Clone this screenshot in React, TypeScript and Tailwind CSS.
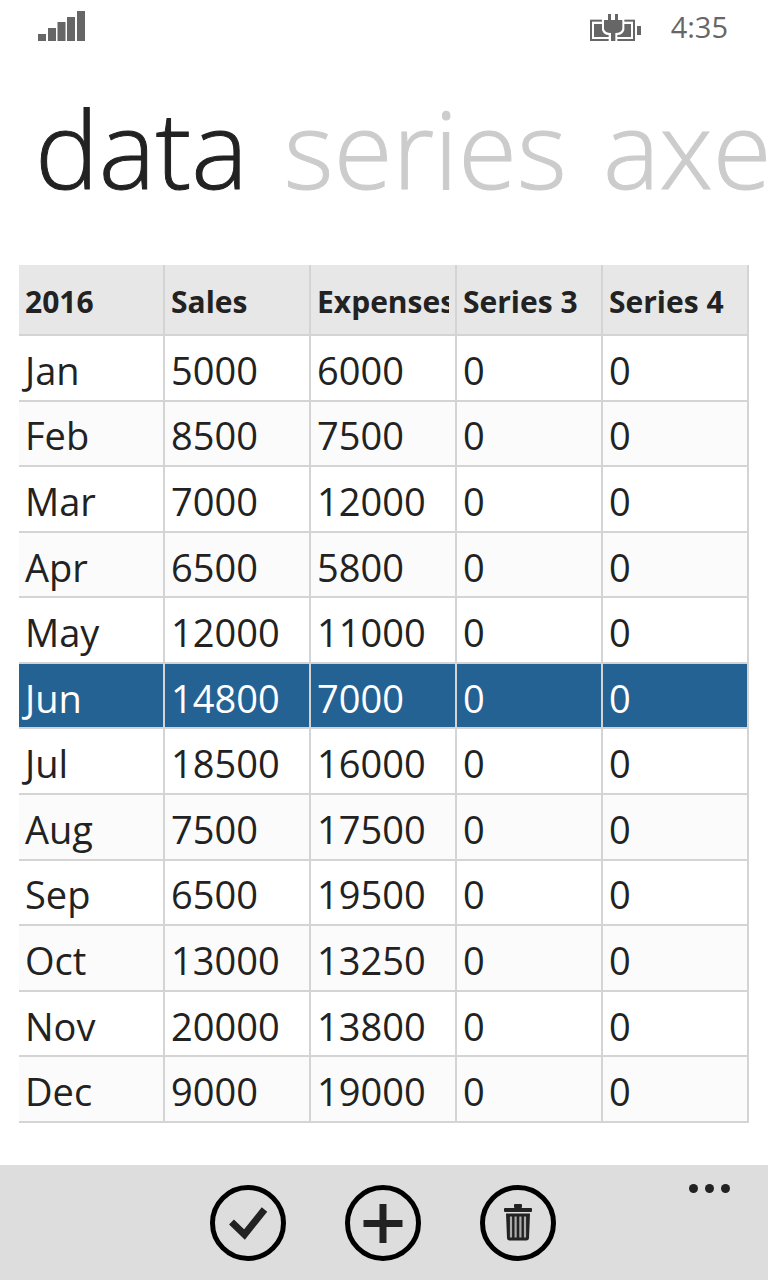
import { useState } from "react";

const headers = ["2016", "Sales", "Expenses", "Series 3", "Series 4"];

const initialRows = [
    ["Jan", "5000", "6000", "0", "0"],
    ["Feb", "8500", "7500", "0", "0"],
    ["Mar", "7000", "12000", "0", "0"],
    ["Apr", "6500", "5800", "0", "0"],
    ["May", "12000", "11000", "0", "0"],
    ["Jun", "14800", "7000", "0", "0"],
    ["Jul", "18500", "16000", "0", "0"],
    ["Aug", "7500", "17500", "0", "0"],
    ["Sep", "6500", "19500", "0", "0"],
    ["Oct", "13000", "13250", "0", "0"],
    ["Nov", "20000", "13800", "0", "0"],
    ["Dec", "9000", "19000", "0", "0"],
];

const tabs = ["data", "series", "axes"];

function SignalIcon() {
    return (
        <svg width="48" height="32" viewBox="0 0 48 32" fill="#666666" aria-hidden="true">
            <rect x="0" y="23" width="8" height="7" />
            <rect x="10" y="17" width="8" height="13" />
            <rect x="19.5" y="11" width="8" height="19" />
            <rect x="29" y="6" width="8" height="24" />
            <rect x="39" y="0" width="8" height="30" />
        </svg>
    );
}

function BatteryIcon() {
    return (
        <svg width="51" height="27" viewBox="0 0 153 81" fill="#666666" aria-hidden="true">
            <rect x="3" y="20" width="129" height="58" fill="none" stroke="#666666" strokeWidth="6" />
            <rect x="12" y="30" width="111" height="39" />
            <rect x="141" y="36" width="12" height="27" />
            <path d="M36 12H103V48Q98 63 82 63V81H56V63Q41 63 36 48Z" fill="white" />
            <path d="M42 18H54V0H63V18H75V0H84V18H97V44Q94 57 76 57V81H63V57Q45 57 42 44Z" />
        </svg>
    );
}

function CheckIcon() {
    return (
        <svg width="66" height="66" viewBox="5 5 66 66" fill="none" aria-hidden="true">
            <path d="M21.5 37L34.5 49.5L54.5 24.5" stroke="#222222" strokeWidth="7" />
        </svg>
    );
}

function PlusIcon() {
    return (
        <svg width="66" height="66" viewBox="5 5 66 66" fill="none" aria-hidden="true">
            <path d="M18.5 38.5H57.5M38 19V58" stroke="#222222" strokeWidth="7" />
        </svg>
    );
}

function TrashIcon() {
    return (
        <svg width="66" height="66" viewBox="5 5 66 66" fill="none" aria-hidden="true">
            <rect x="34" y="19" width="8" height="4" rx="1" fill="#222222" />
            <rect x="24" y="23" width="28" height="4" rx="1" fill="#222222" />
            <path d="M26 28.5H50L49 53Q48.8 55.5 46 55.5H30Q27.2 55.5 27 53Z" fill="#222222" />
            <path d="M31 31.5V52.5M35.6 31.5V52.5M40.4 31.5V52.5M45 31.5V52.5" stroke="#aaaaaa" strokeWidth="2.2" />
        </svg>
    );
}

export default function App() {
    const [tab, setTab] = useState("data");
    const [rows, setRows] = useState(initialRows);
    const [selected, setSelected] = useState(5);

    function addRow() {
        setRows([...rows, ["", "0", "0", "0", "0"]]);
    }

    function deleteRow() {
        setRows(rows.filter((_, i) => i !== selected));
    }

    const circle = "size-[76px] shrink-0 rounded-full border-[5px] border-black flex items-center justify-center cursor-pointer";

    return (
        <div className="min-h-screen flex flex-col bg-white text-[#222222] font-['Open_Sans',sans-serif] overflow-hidden">
            <header className="flex items-center justify-between h-[54px] pl-[38px] pr-10 text-[#666666]">
                <SignalIcon />
                <div className="flex items-center gap-[30px]">
                    <BatteryIcon />
                    <span className="text-[29px] leading-8">4:35</span>
                </div>
            </header>

            <nav className="flex gap-9 h-[211px] pt-[21px] pl-[35px] whitespace-nowrap overflow-hidden">
                {tabs.map((name) => (
                    <button
                        key={name}
                        onClick={() => setTab(name)}
                        className={`h-36 shrink-0 text-[107px] leading-none font-light [-webkit-text-stroke:1px] cursor-pointer ${tab === name ? "text-[#222222]" : "text-[#cccccc]"}`}
                    >
                        {name}
                    </button>
                ))}
            </nav>

            <main className="flex-1 flex px-[19px] pb-[42px]">
                <table className="w-full table-fixed border-separate border-spacing-0 text-left">
                    <thead>
                        <tr className="h-[71px] bg-[#e7e7e7]">
                            {headers.map((h) => (
                                <th key={h} className="px-[6px] pt-1 border-r-2 border-b-2 border-[#d4d4d4] text-[30px] leading-10 font-bold">
                                    <div className="overflow-hidden whitespace-nowrap">{h}</div>
                                </th>
                            ))}
                        </tr>
                    </thead>
                    <tbody>
                        {rows.map((row, i) => (
                            <tr
                                key={i}
                                onClick={() => setSelected(i)}
                                className={i === selected ? "bg-[#246294] text-white" : i % 2 ? "bg-[#fbfbfb]" : "bg-white"}
                            >
                                {row.map((cell, j) => (
                                    <td key={j} className="pl-[6px] pt-1 border-r-2 border-b-2 border-[#d4d4d4] text-[38px] leading-[56px]">
                                        {cell}
                                    </td>
                                ))}
                            </tr>
                        ))}
                    </tbody>
                </table>
            </main>

            <footer className="grid grid-cols-[1fr_auto_1fr] h-[115px] bg-[#dddddd]">
                <div className="col-start-2 flex gap-[59px] pt-5 pr-[3px]">
                    <button aria-label="Accept" className={circle}>
                        <CheckIcon />
                    </button>
                    <button aria-label="Add row" className={circle} onClick={addRow}>
                        <PlusIcon />
                    </button>
                    <button aria-label="Delete row" className={circle} onClick={deleteRow}>
                        <TrashIcon />
                    </button>
                </div>
                <button aria-label="More" className="flex gap-[7px] justify-self-end self-start pt-[19px] pr-[38px] cursor-pointer">
                    <span className="size-[9px] rounded-full bg-[#222222]"></span>
                    <span className="size-[9px] rounded-full bg-[#222222]"></span>
                    <span className="size-[9px] rounded-full bg-[#222222]"></span>
                </button>
            </footer>
        </div>
    );
}
